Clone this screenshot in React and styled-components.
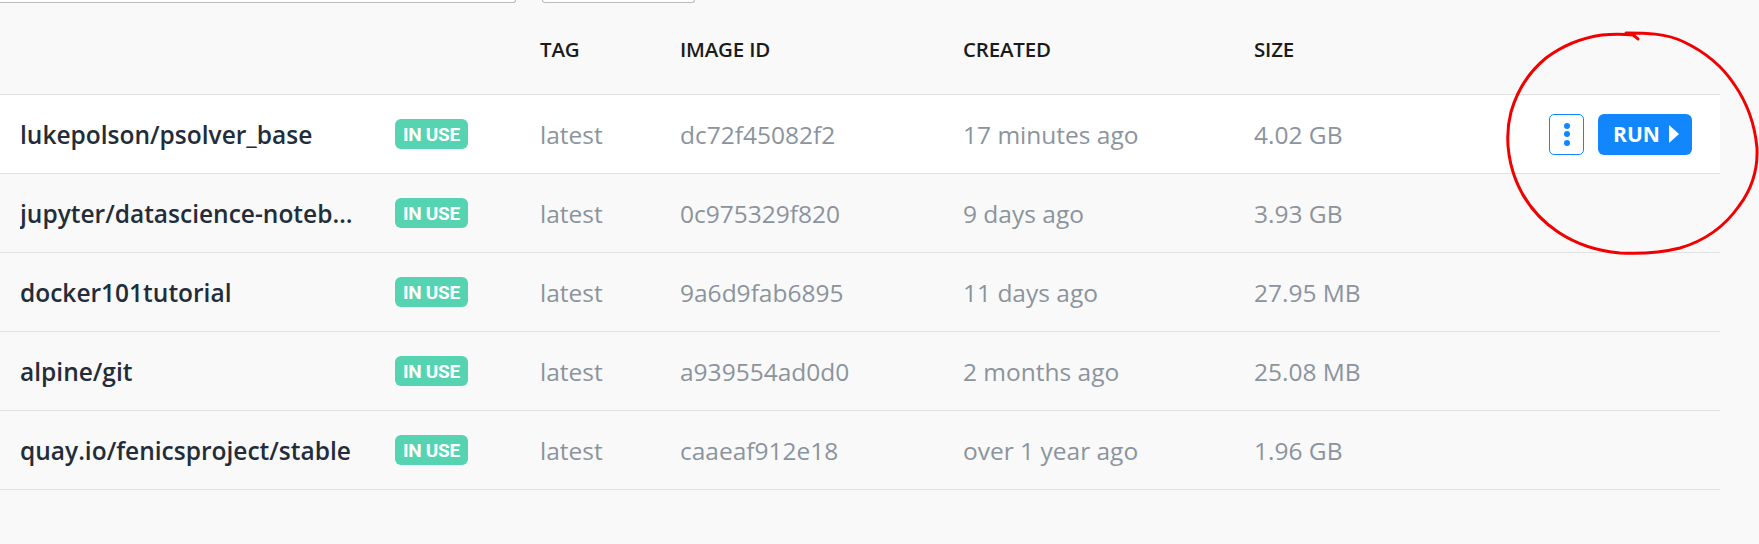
import styled, { createGlobalStyle } from 'styled-components';

const GlobalStyle = createGlobalStyle`
    html, body {
        margin: 0;
        padding: 0;
        background-color: #f9f9f9;
        font-family: "Open Sans", "Liberation Sans", sans-serif;
    }
`;

const Page = styled.div`
    position: relative;
    width: 1759px;
    height: 544px;
    overflow: hidden;
    background-color: #f9f9f9;
`;

const Toolbar = styled.div`
    display: flex;
    flex-direction: row;
    align-items: flex-end;
    gap: 26px;
    height: 3px;
    overflow: hidden;
`;

const ToolbarStub = styled.div`
    width: ${props => props.width}px;
    margin-left: ${props => props.offset || 0}px;
    height: 2px;
    border: 1px solid #bdbdbd;
    border-top: none;
    border-radius: 0 0 4px 4px;
    background-color: #ffffff;
`;

const Table = styled.div`
    width: 1720px;
    display: flex;
    flex-direction: column;
`;

const Grid = styled.div`
    display: grid;
    grid-template-columns: 375px 145px 140px 283px 291px 1fr auto;
    align-items: center;
    padding: 0 28px 0 20px;
    border-bottom: 1px solid #e1e1e1;
`;

const HeaderRow = styled(Grid)`
    height: 91px;
`;

const Row = styled(Grid)`
    height: 78px;
    background-color: ${props => (props.active ? '#ffffff' : 'transparent')};
`;

const HeaderCell = styled.div`
    font-size: 20.5px;
    font-weight: 600;
    color: #1b1b1b;
    text-transform: uppercase;
    letter-spacing: -0.2px;
`;

const Name = styled.div`
    width: 334px;
    font-size: 24.5px;
    font-weight: 600;
    color: #232d39;
    white-space: nowrap;
    overflow: hidden;
    text-overflow: ellipsis;
`;

const Muted = styled.div`
    font-size: 24.5px;
    color: #8b949d;
    white-space: nowrap;
`;

const Badge = styled.span`
    justify-self: start;
    display: inline-flex;
    align-items: center;
    height: 30px;
    padding: 0 8px;
    border-radius: 6px;
    background-color: #56d3b1;
    color: #ffffff;
    font-family: Roboto, "Liberation Sans", sans-serif;
    font-weight: 700;
    font-size: 19px;
    letter-spacing: -0.3px;
`;

const Actions = styled.div`
    display: flex;
    flex-direction: row;
    align-items: center;
    gap: 14px;
`;

const MenuButton = styled.button`
    width: 35px;
    height: 41px;
    display: flex;
    flex-direction: column;
    align-items: center;
    justify-content: center;
    gap: 2.5px;
    padding: 0;
    border: 1px solid #1287fd;
    border-radius: 5px;
    background-color: #ffffff;
`;

const Dot = styled.span`
    width: 6px;
    height: 6px;
    border-radius: 50%;
    background-color: #1287fd;
`;

const RunButton = styled.button`
    width: 94px;
    height: 41px;
    display: flex;
    align-items: center;
    justify-content: center;
    gap: 9px;
    padding: 0 0 0 2px;
    border: none;
    border-radius: 6px;
    background-color: #1287fd;
    color: #ffffff;
    font-family: "Open Sans", sans-serif;
    font-weight: 700;
    font-size: 21px;
`;

const Annotation = styled.svg`
    position: absolute;
    left: 0;
    top: 0;
    pointer-events: none;
`;

const images = [
    { name: 'lukepolson/psolver_base', tag: 'latest', id: 'dc72f45082f2', created: '17 minutes ago', size: '4.02 GB' },
    { name: 'jupyter/datascience-notebook', tag: 'latest', id: '0c975329f820', created: '9 days ago', size: '3.93 GB' },
    { name: 'docker101tutorial', tag: 'latest', id: '9a6d9fab6895', created: '11 days ago', size: '27.95 MB' },
    { name: 'alpine/git', tag: 'latest', id: 'a939554ad0d0', created: '2 months ago', size: '25.08 MB' },
    { name: 'quay.io/fenicsproject/stable', tag: 'latest', id: 'caaeaf912e18', created: 'over 1 year ago', size: '1.96 GB' },
];

const RowActions = () => (
    <Actions>
        <MenuButton>
            <Dot />
            <Dot />
            <Dot />
        </MenuButton>
        <RunButton>
            RUN
            <svg width="10" height="18" viewBox="0 0 10 18">
                <path d="M0 0 L10 9 L0 18 Z" fill="#ffffff" />
            </svg>
        </RunButton>
    </Actions>
);

export default function App() {
    return (
        <Page>
            <GlobalStyle />
            <Toolbar>
                <ToolbarStub width={524} offset={-10} />
                <ToolbarStub width={151} />
            </Toolbar>
            <Table>
                <HeaderRow>
                    <div />
                    <div />
                    <HeaderCell>Tag</HeaderCell>
                    <HeaderCell>Image ID</HeaderCell>
                    <HeaderCell>Created</HeaderCell>
                    <HeaderCell>Size</HeaderCell>
                    <div />
                </HeaderRow>
                {images.map((image, i) => (
                    <Row key={image.id} active={i === 0}>
                        <Name>{image.name}</Name>
                        <Badge>IN USE</Badge>
                        <Muted>{image.tag}</Muted>
                        <Muted>{image.id}</Muted>
                        <Muted>{image.created}</Muted>
                        <Muted>{image.size}</Muted>
                        {i === 0 ? <RowActions /> : <div />}
                    </Row>
                ))}
            </Table>
            <Annotation width="1759" height="544" viewBox="0 0 1759 544">
                <path
                    d="M1638 39 C1634 35 1630 33 1626 33 C1645 33 1666 33 1684 42 C1705 52 1722 66 1734 84 C1748 104 1755 126 1757 148 C1758 170 1751 190 1739 206 C1725 226 1704 241 1680 248 C1660 253 1640 254 1620 253 C1597 251 1576 244 1558 232 C1537 218 1521 197 1513 172 C1507 152 1506 131 1511 112 C1517 91 1529 72 1546 58 C1562 46 1581 38 1602 35 C1612 34 1622 34 1634 35"
                    fill="none"
                    stroke="#f20000"
                    strokeWidth="3"
                    strokeLinecap="round"
                    strokeLinejoin="round"
                />
            </Annotation>
        </Page>
    );
}
